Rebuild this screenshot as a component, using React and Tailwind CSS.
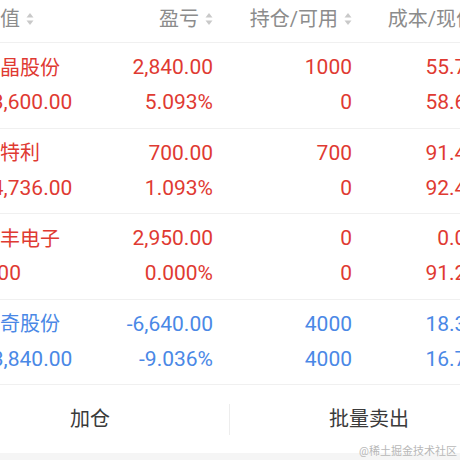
import React from 'react';

const RED = 'text-[#df3a32]';
const BLUE = 'text-[#4a88e6]';

const rows = [
  { name: '蓝晶股份', value: '53,600.00', pl: '2,840.00', plPct: '5.093%', hold: '1000', avail: '0', cost: '55.760', price: '58.600', up: true },
  { name: '奥特利', value: '64,736.00', pl: '700.00', plPct: '1.093%', hold: '700', avail: '0', cost: '91.480', price: '92.480', up: true },
  { name: '华丰电子', value: '0.00', pl: '2,950.00', plPct: '0.000%', hold: '0', avail: '0', cost: '0.000', price: '91.200', up: true },
  { name: '新奇股份', value: '73,840.00', pl: '-6,640.00', plPct: '-9.036%', hold: '4000', avail: '4000', cost: '18.310', price: '16.720', up: false },
];

const SortIcon = () => (
  <svg width="8" height="14" viewBox="0 0 8 14" className="ml-[6px] shrink-0">
    <path d="M4 1 L7.5 5.5 H0.5 Z" fill="#c9c9c9" />
    <path d="M4 13 L7.5 8.5 H0.5 Z" fill="#c9c9c9" />
  </svg>
);

const HeaderCell = ({ label, className }) => (
  <div className={`flex shrink-0 items-center whitespace-nowrap ${className}`}>
    <span>{label}</span>
    <SortIcon />
  </div>
);

const Row = ({ r }) => {
  const color = r.up ? RED : BLUE;
  return (
    <div className={`flex flex-1 flex-col justify-center border-b border-[#f0f0f0] ${color}`}>
      <div className="flex h-[35px] items-center whitespace-nowrap">
        <div className="ml-[-2px] w-[112px] shrink-0 text-[20px]">{r.name}</div>
        <div className="w-[121px] shrink-0 text-right text-[21px]">{r.pl}</div>
        <div className="w-[139px] shrink-0 text-right text-[21px]">{r.hold}</div>
        <div className="w-[138px] shrink-0 text-right text-[21px]">{r.cost}</div>
      </div>
      <div className="flex h-[35px] items-center whitespace-nowrap text-[21px]">
        <div className="ml-[-2px] w-[112px] shrink-0">{r.value}</div>
        <div className="w-[121px] shrink-0 text-right">{r.plPct}</div>
        <div className="w-[139px] shrink-0 text-right">{r.avail}</div>
        <div className="w-[138px] shrink-0 text-right">{r.price}</div>
      </div>
    </div>
  );
};

export default function App() {
  return (
    <div
      className="relative flex h-[460px] w-[460px] flex-col overflow-hidden bg-white"
      style={{ fontFamily: 'Roboto, "Noto Sans CJK SC", sans-serif' }}
    >
      <div className="ml-[-20px] flex h-[43px] w-[480px] shrink-0 items-center border-b border-[#f0f0f0] pb-[4px] text-[20px] text-[#8c8c8c]">
        <HeaderCell label="市值" className="w-[112px]" />
        <HeaderCell label="盈亏" className="w-[121px] justify-end" />
        <HeaderCell label="持仓/可用" className="w-[139px] justify-end" />
        <HeaderCell label="成本/现价" className="w-[138px] justify-end" />
      </div>

      <div className="ml-[-18px] flex h-[342px] w-[478px] shrink-0 flex-col">
        {rows.map((r) => (
          <Row key={r.name} r={r} />
        ))}
      </div>

      <div className="ml-[-49px] flex h-[68px] w-[557px] shrink-0 items-center text-[20px] text-[#3a3a3a]">
        <div className="flex w-[278px] shrink-0 justify-center">加仓</div>
        <div className="h-[31px] w-px shrink-0 bg-[#ededed]" />
        <div className="flex w-[278px] shrink-0 justify-center">批量卖出</div>
      </div>

      <div className="flex-1 bg-[#f5f5f5]" />

      <div className="absolute bottom-[3px] right-[3px] text-[11px] leading-none text-[#b8b8b8]">
        @稀土掘金技术社区
      </div>
    </div>
  );
}
